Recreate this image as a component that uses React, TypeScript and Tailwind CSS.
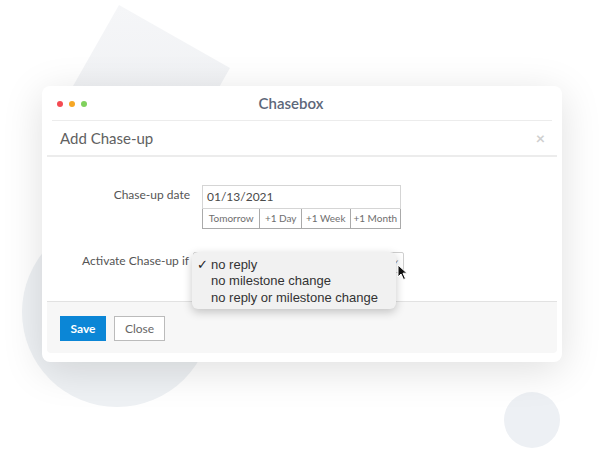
import React from "react";

const options = ["no reply", "no milestone change", "no reply or milestone change"];
const quick = [
  { label: "Tomorrow", w: "w-[57px]" },
  { label: "+1 Day", w: "w-[42px]" },
  { label: "+1 Week", w: "w-[49px]" },
  { label: "+1 Month", w: "w-[51px]" },
];

function Backdrop() {
  return (
    <svg className="absolute inset-0" width="616" height="451" aria-hidden="true">
      <defs>
        <linearGradient id="sq" x1="0" y1="0" x2="0" y2="1">
          <stop offset="0" stopColor="#f5f6f8" />
          <stop offset="1" stopColor="#eceef1" />
        </linearGradient>
      </defs>
      <polygon points="119,5 230,68 167,179 56,116" fill="url(#sq)" />
      <circle cx="117" cy="312" r="95" fill="#eef1f4" />
      <circle cx="532" cy="420" r="28" fill="#edf0f4" />
    </svg>
  );
}

function Cursor() {
  return (
    <svg className="absolute left-[350px] top-[107px] z-20" width="12" height="17" viewBox="0 0 12 17" aria-hidden="true">
      <path d="M1 1 L1 13 L4 10 L6.5 15.5 L8.5 14.6 L6 9.2 L10 9.2 Z" fill="#111" stroke="#fff" strokeWidth="1" strokeLinejoin="round" />
    </svg>
  );
}

export default function App() {
  return (
    <div
      className="relative h-[451px] w-[616px] overflow-hidden bg-white"
      style={{ fontFamily: "Lato, 'Open Sans', sans-serif" }}
    >
      <Backdrop />
      <div className="relative pl-[42px] pt-[86px]">
        <div className="flex h-[276px] w-[520px] flex-col rounded-[8px] bg-white px-[5px] pb-[9px] shadow-[0_8px_40px_rgba(0,0,0,0.13)]">
          {/* window title bar */}
          <div className="relative flex h-[34px] items-center pl-[10px] pt-[2px]">
            <div className="flex gap-[6px]">
              <span className="h-[6px] w-[6px] rounded-full bg-[#f44a52]" />
              <span className="h-[6px] w-[6px] rounded-full bg-[#f6a724]" />
              <span className="h-[6px] w-[6px] rounded-full bg-[#80d15d]" />
            </div>
            <div className="absolute inset-x-0 top-[6px] pr-[22px] text-center text-[15px] font-semibold text-[#5d6779]">
              Chasebox
            </div>
          </div>
          <div className="mx-[5px] border-t border-[#ececec]" />

          {/* modal header */}
          <div className="flex h-[36px] items-center justify-between border-b-2 border-[#ececec] pl-[13px] pr-[12px]">
            <span className="text-[15px] text-[#616161]">Add Chase-up</span>
            <span className="text-[16px] font-bold leading-none text-[#cfcfcf]">×</span>
          </div>

          {/* body */}
          <div className="relative flex flex-1 flex-col pt-[28px]">
            <div className="flex items-start">
              <div className="w-[143px] pt-[1px] text-right text-[12px] text-[#555]">Chase-up date</div>
              <div className="ml-[12px] flex w-[199px] flex-col">
                <div className="flex h-[24px] items-center border border-[#d5d5d5] px-[4px] text-[12px] text-[#4a4a4a]">
                  01/13/2021
                </div>
                <div className="flex h-[20px] border border-t-0 border-[#aaa]">
                  {quick.map((q, i) => (
                    <div
                      key={q.label}
                      className={`${q.w} flex items-center justify-center text-[10px] text-[#6e6e6e] ${i > 0 ? "border-l border-[#aaa]" : ""}`}
                    >
                      {q.label}
                    </div>
                  ))}
                </div>
              </div>
            </div>

            <div className="mt-[23px] flex items-start">
              <div className="w-[142px] text-right text-[12px] text-[#555]">Activate Chase-up if</div>
              <div className="ml-[4px] h-[21px] w-[211px] rounded-[2px] border border-[#cfcfcf] bg-white">
                <div className="flex h-full items-end justify-end pb-[3px] pr-[3px] text-[9px] text-[#777]">✓</div>
              </div>
            </div>

            <Cursor />

            {/* open dropdown */}
            <div
              className="absolute left-[145px] top-[95px] z-10 w-[204px] rounded-[6px] bg-[#f1f1f1] pb-[3px] pt-[4px] text-[13px] text-[#333] shadow-[0_3px_10px_rgba(0,0,0,0.22)]"
              style={{ fontFamily: "'Liberation Sans', Arial, sans-serif" }}
            >
              {options.map((o, i) => (
                <div key={o} className="flex h-[16.5px] items-center">
                  <span className="w-[19px] pl-[5px] text-[13px] text-[#222]">{i === 0 ? "✓" : ""}</span>
                  <span>{o}</span>
                </div>
              ))}
            </div>
          </div>

          {/* footer */}
          <div className="flex h-[52px] items-start gap-[8px] rounded-b-[4px] border-t border-[#e2e2e2] bg-[#f7f7f7] pl-[13px] pt-[14px]">
            <button className="h-[25px] w-[46px] bg-[#0b86d6] text-[12px] font-bold text-white">Save</button>
            <button className="h-[25px] w-[51px] border border-[#bbb] bg-white text-[12px] text-[#666]">Close</button>
          </div>
        </div>
      </div>
    </div>
  );
}
